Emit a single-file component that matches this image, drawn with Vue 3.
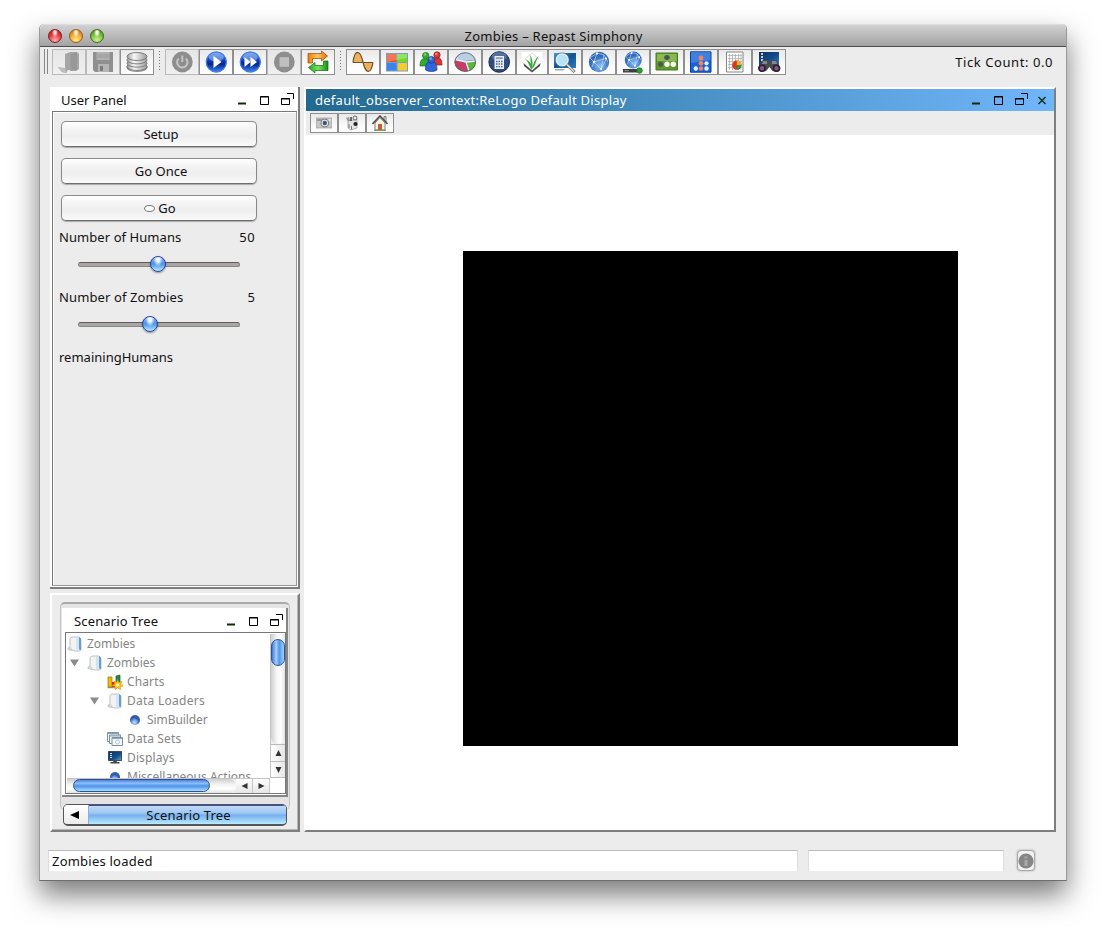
<script setup>
const disc = (fill, glyph, rim) =>
  `<circle cx="12.3" cy="12" r="10.4" fill="${fill}"/>${rim || ''}${glyph}`

const blueGlow = '<ellipse cx="12.3" cy="7" rx="7.6" ry="4.6" fill="#9dc2fa" opacity=".55"/><circle cx="12.3" cy="12" r="10" fill="none" stroke="#4a7fe0" stroke-width="1.2"/>'

const globe = `<circle cx="12" cy="12" r="10.2" fill="url(#globe)"/>
  <path d="M3 8L10 3L17 5L21 12M10 3L7 12L14 19M3 8L7 12L20 8M7 12L5 17M14 19L20 8M14 19L17 5" stroke="#d9ebff" stroke-width=".8" fill="none" opacity=".75"/>
  <g fill="#fff"><circle cx="10" cy="3.6" r="1.1"/><circle cx="7" cy="12" r="1.2"/><circle cx="14" cy="19" r="1.1"/><circle cx="19" cy="8.5" r="1.1"/></g>`

const fileIcons = [
  { name: 'open', off: true, art: '<path d="M1 17L8 19V4L13 2H20L22 4V19L19 21L11 20L9 23L5 22Z" fill="#a6a6a6"/><path d="M13.5 4L20 2V20L13.5 21Z" fill="#989898"/><path d="M1 17L8 18L10 23L5 22Z" fill="#bdbdbd"/>' },
  { name: 'save', off: true, art: '<path d="M2 2H22V22H4L2 20Z" fill="#8f8f8f"/><path d="M5.5 2H18.5V10H5.5Z" fill="#b2b2b2"/><path d="M6 5H18M6 7H18" stroke="#9a9a9a"/><path d="M7 14H18V22H7Z" fill="#b5b5b5"/><path d="M9 16H12V21H9Z" fill="#7c7c7c"/>' },
  { name: 'data', art: '<g stroke="#777" stroke-width=".9" fill="url(#metal)"><path d="M2 16V18C3 22.5 21 22.5 22 18V16Z"/><ellipse cx="12" cy="16.5" rx="10" ry="4"/><ellipse cx="12" cy="13.2" rx="10" ry="4"/><ellipse cx="12" cy="9.9" rx="10" ry="4"/><ellipse cx="12" cy="6.5" rx="10" ry="4"/></g>' },
]

const runIcons = [
  { name: 'power', off: true, art: disc('#8e8e8e', '<path d="M8.8 8.4A5.2 5.2 0 1 0 15.8 8.4M12.3 5.5V12" stroke="#c6c6c6" stroke-width="2" fill="none"/>') },
  { name: 'play', art: disc('url(#blue)', '<path d="M9.5 6V18L17.5 12Z" fill="#fff"/>', blueGlow) },
  { name: 'step', art: disc('url(#blue)', '<path d="M6.5 7V17L12.5 12ZM12.5 7V17L19 12Z" fill="#fff"/>', blueGlow) },
  { name: 'stop', off: true, art: disc('#8e8e8e', '<path d="M7.5 7.2H17V16.8H7.5Z" fill="#c0c0c0"/>') },
  { name: 'reset', art: '<path d="M2 13V3.500H15.500V1L21.500 6L15.500 11V8.500H6.500V13Z" fill="url(#orange)" stroke="#8c4a00" stroke-width=".7"/><path d="M22 11V20.500H9V23L2.500 17.500L9 12.500V15.500H17.500V11Z" fill="url(#green)" stroke="#176b0b" stroke-width=".7"/>' },
]

const viewIcons = [
  { name: 'wave', art: '<path d="M2 12C3.5 -1 9 -1 11.5 12ZM11.5 12C14 25.5 20 24 22 12Z" fill="#eeb05b"/><path d="M2 12.5C3.5 -1 9 -1 12 12C15 25 20 24 22 12.5M2 12.5H22" fill="none" stroke="#6e5130" stroke-width="1.2"/>' },
  { name: 'grid', art: '<path d="M1 3H23V21.5H1Z" fill="#7d9bc4"/><path d="M2 4H11.5V12H2Z" fill="#f04a1a"/><path d="M12.5 4H22V12H12.5Z" fill="#6ddc26"/><path d="M2 13H11.5V20.5H2Z" fill="#3c83ec"/><path d="M12.5 13H22V20.5H12.5Z" fill="#f6cb2c"/><path d="M2 4H22V8L2 12Z" fill="#fff" opacity=".25"/>' },
  { name: 'people', art: '<g stroke-width=".6"><g fill="#30ad2b" stroke="#126613"><path d="M1 16C1 9 4 8 6.500 9C10 8 11 11 11 16Z"/><circle cx="6.700" cy="5.600" r="3.200"/></g><g fill="#d73636" stroke="#831111"><path d="M13 15C13 8 16 7 18 8C22 7 23 11 23 15Z"/><circle cx="18" cy="5" r="3.200"/></g><g fill="#3164d6" stroke="#123184"><path d="M6.500 20C6.500 12 9 11 12.300 13C16 11 18 13 18 20C15 22 10 22 6.500 20Z"/><circle cx="12.300" cy="9.800" r="3.400"/></g></g><g fill="#fff" opacity=".4"><circle cx="6" cy="4.500" r="1.300"/><circle cx="17.300" cy="4" r="1.300"/><circle cx="11.600" cy="8.600" r="1.300"/></g>' },
  { name: 'pie', art: '<ellipse cx="12.2" cy="12.5" rx="10.5" ry="9.3" fill="#53606a"/><path d="M12 11L1.8 11C4 1 20 0 22.4 10Z" fill="#b9cfe3"/><path d="M12.500 12L2 9C0 17 8 22.500 15.500 21Z" fill="#c43f65"/><path d="M13 12L22.500 11.500C23 16 20 20 16.500 21Z" fill="#5bb63c"/><path d="M2 9.500L13 12L16 21M13 12L22.500 11" stroke="#f2f7f8" stroke-width="1.3" fill="none"/><ellipse cx="12.2" cy="12" rx="10.3" ry="9.300" fill="none" stroke="#57636e" stroke-width=".9"/>' },
  { name: 'calculator', art: '<circle cx="12.2" cy="12" r="10.3" fill="#304b7c" stroke="#182d58"/><ellipse cx="12.2" cy="6.5" rx="7.5" ry="4.5" fill="#7891b8" opacity=".55"/><path d="M7.5 6H17V19H7.5Z" fill="#edf1f4"/><path d="M8.7 7.200H15.8V9.200H8.7Z" fill="#8f9db3"/><path d="M9 11.5H16M9 14H16M9 16.7H16" stroke="#506487" stroke-width="1.3" stroke-dasharray="1.6 .9"/>' },
  { name: 'plant', narrow: true, art: '<path d="M1.5 2H22.5V23H1.5Z" fill="#fff"/><path d="M3.5 13L12 20.5L20.5 13L20 16L12 22.5L4 16Z" fill="#4b4b4b"/><path d="M5 9L12 3L19 9" stroke="#d5ddd0" fill="none"/><path d="M12 19C10 15 11 9 10 5C13 9 13 15 12 19ZM12 20C9 17 9 12 5 9C11 11 12 16 12 20ZM12 19C13 14 15 9 18.500 6C15.500 12 15 17 12 19Z" fill="#3da642"/>' },
  { name: 'search', art: '<path d="M1 3H23V18H1Z" fill="url(#screen)"/><path d="M2 19H12L10 20.500H2Z" fill="#9aa9b9"/><circle cx="9.2" cy="9.8" r="6.1" fill="#b8e3f7" stroke="#e4eef3" stroke-width="1.5"/><circle cx="9.2" cy="9.8" r="7" fill="none" stroke="#406987" stroke-width=".6"/><path d="M14 14.500L21.500 22" stroke="#666" stroke-width="3"/><path d="M14 14.500L21 21.500" stroke="#e8e8e8" stroke-width="1.5"/>' },
  { name: 'network', art: globe },
  { name: 'network-edit', art: `<g transform="translate(2.3 0) scale(.83)">${globe}</g><path d="M2 19H16V22.500H2Z" fill="#3b3f41"/><path d="M3.5 20.7H8" stroke="#8d9495"/><circle cx="18.5" cy="20.5" r="2.8" fill="#27a32c" stroke="#15681b" stroke-width=".7"/>` },
  { name: 'agents', art: '<path d="M1 3H22.5V20H1Z" fill="#5e9b2b" stroke="#49792a"/><path d="M2 4H21.5V11H2Z" fill="#a2cb62" opacity=".65"/><ellipse cx="12" cy="7.500" rx="2.800" ry="2.500" fill="#4d5552"/><circle cx="5.6" cy="14.3" r="2.5" fill="#4d5552"/><circle cx="12" cy="14.3" r="2.7" fill="#f9fdf3"/><circle cx="18.3" cy="14.3" r="2.7" fill="#f9fdf3"/>' },
  { name: 'hierarchy', art: '<path d="M1.5 1.8H22V22.2H1.5Z" fill="#1b63d1" stroke="#0a3da0"/><path d="M2 2H21.5V10L2 13Z" fill="#75adf5" opacity=".4"/><g fill="#f1825c"><circle cx="12" cy="8" r="2.4"/><circle cx="12" cy="13.3" r="2.4"/><circle cx="12" cy="18.5" r="2.2"/></g><g fill="#e2effe"><circle cx="6.8" cy="18.5" r="2.2"/><circle cx="17.5" cy="18.5" r="2.2"/><circle cx="17.5" cy="13.3" r="2.1"/></g>' },
  { name: 'report', art: '<path d="M3.5 2H20V22H3.5Z" fill="#fff" stroke="#858585"/><path d="M6.5 4V20M9.5 4V20M12.5 4V20M15.5 4V20M18 4V20M5 5.5H19M5 8.5H19M5 11.5H19M5 14.5H19M5 17.5H19" stroke="#b0b0b0" stroke-width=".8"/><circle cx="13.8" cy="15.2" r="4.6" fill="#dc3423"/><path d="M13.8 15.2V10.6A4.6 4.6 0 0 1 18.4 15Z" fill="#f2af20"/><path d="M13.8 15.2L18.4 15A4.6 4.6 0 0 1 14 19.800Z" fill="#269842"/>' },
  { name: 'binoculars', art: '<path d="M2 2H22V16H2Z" fill="url(#night)"/><path d="M4 4H6M4 7H6M4 10H6" stroke="#fff" stroke-width="1.7"/><path d="M1 18L5.500 10.500H10.500L12.5 12L14.500 10.500H19L23.5 18L21 22L15.5 21L12.5 17L9 21L4 22Z" fill="#4a4a4e"/><path d="M6 11H10V14H5ZM15 11H19L20 14H15Z" fill="#85868a"/><g fill="#8f4f9a" stroke="#252126" stroke-width="1.6"><circle cx="5" cy="18.3" r="3"/><circle cx="19.5" cy="18.3" r="3"/></g>' },
]

const displayIcons = [
  { name: 'camera', art: '<path d="M0 3H16V13H0Z" fill="#c7c7c7" stroke="#999" stroke-width=".7"/><path d="M1 4H6V6H1Z" fill="#999"/><circle cx="8.8" cy="8" r="4" fill="#e6e9eb" stroke="#787878"/><circle cx="8.8" cy="8" r="2.2" fill="#3c5777"/><path d="M12.5 5H15" stroke="#f7f7f7"/>' },
  { name: 'movie', art: '<path d="M2 3L5 2L6 6L4 7Z" fill="#999"/><path d="M4 6L13 4.500V13L7 15L4 13Z" fill="#e4e4e4" stroke="#888" stroke-width=".6"/><circle cx="11.5" cy="9" r="2.1" fill="#222"/><path d="M5 9V13M7.500 11V14.500" stroke="#777"/><circle cx="11" cy="3" r="2" fill="#eee" stroke="#444" stroke-width=".8"/><path d="M7 2V6" stroke="#333" stroke-width="1.400"/>' },
  { name: 'home', art: '<path d="M12 1.5H14V7L12 5Z" fill="#ddd" stroke="#555" stroke-width=".7"/><path d="M3 8L8 2.5L13 8V15H3Z" fill="#f8f4e5" stroke="#666" stroke-width=".8"/><path d="M.5 9L8 1L15.5 9" fill="none" stroke="#4e5047" stroke-width="1.6"/><path d="M6 9H10V15H6Z" fill="#c7602c"/><path d="M2 15.3H14" stroke="#659342"/>' },
]

const folder = '<path d="M3 2.500L5 1H12L14 3V14L12 15H7L6 14L5 14.500L1 13.500V12L3 11Z" fill="#f1f3f5" stroke="#a7adb3" stroke-width=".7"/><path d="M12 1L14 2.500V14L12 13.500Z" fill="#669ed3"/><path d="M9 2H12V13.500L9 14Z" fill="#d3e4f3"/><path d="M1 12L4 11L6 14.500L3 14.500Z" fill="#d2d4d5"/>'
const ball = '<circle cx="8" cy="8" r="5" fill="url(#ball)"/>'

const tree = [
  { label: 'Zombies', depth: 0, icon: folder },
  { label: 'Zombies', depth: 1, icon: folder, open: true },
  { label: 'Charts', depth: 2, icon: '<path d="M.5 13.5H12" stroke="#999" stroke-width="1.5"/><path d="M1 3H5V13H1Z" fill="#f2b707" stroke="#9a7300" stroke-width=".7"/><path d="M5 8H8V13H5Z" fill="#d42b17"/><path d="M9 2L13 1V10H9Z" fill="#25894c" stroke="#185b31" stroke-width=".7"/><path d="M10.5 5.5L11.7 8.5L15 7.5L13.5 10.3L16 12L13 12.5L13.5 15.5L10.7 13.7L8 15.5L8.2 12.3L5 11.5L8 10L7 7.3L9.8 8.3Z" fill="#ffcc18" stroke="#e98c0b" stroke-width=".7"/><circle cx="10.6" cy="11" r="1.4" fill="#fffbd0"/>' },
  { label: 'Data Loaders', depth: 2, icon: folder, open: true },
  { label: 'SimBuilder', depth: 3, icon: ball },
  { label: 'Data Sets', depth: 2, icon: '<g fill="#f4f8fa" stroke="#7892a6"><path d="M.5 1.5H11.5V10.5H.5Z"/><path d="M2.5 4H13.5V12.5H2.5Z"/><path d="M5 6.5H15.5V14.5H5Z"/></g><path d="M.5 2.5H11.5M3 5H13M5 7.5H15" stroke="#8ca6b6" stroke-width="1.2"/><circle cx="10.5" cy="11" r="2" fill="none" stroke="#bcc7ce"/>' },
  { label: 'Displays', depth: 2, icon: '<path d="M1.500 1.5H14.500V10.500H1.500Z" fill="url(#monitor)" stroke="#193451" stroke-width=".8"/><path d="M3 3.500H5M3 5.500H5M3 7.500H5" stroke="#bfe3ff"/><path d="M6.500 11H9.500L10 12H12.500V13.500H3.500V12H6Z" fill="#444"/>' },
  { label: 'Miscellaneous Actions', depth: 2, icon: ball },
]
</script>

<template>
  <div class="desk">
    <svg class="defs" width="0" height="0" aria-hidden="true">
      <defs>
        <linearGradient id="blue" x2="0" y2="1"><stop stop-color="#5b8fe8" /><stop offset=".45" stop-color="#0d3ab6" /><stop offset=".6" stop-color="#05268d" /><stop offset="1" stop-color="#3f8bfa" /></linearGradient>
        <linearGradient id="metal"><stop stop-color="#999" /><stop offset=".35" stop-color="#f8f8f8" /><stop offset="1" stop-color="#9b9b9b" /></linearGradient>
        <linearGradient id="orange"><stop stop-color="#ed7d0c" /><stop offset=".5" stop-color="#ffc35d" /><stop offset="1" stop-color="#e46b00" /></linearGradient>
        <linearGradient id="green"><stop stop-color="#23a620" /><stop offset=".5" stop-color="#73e35d" /><stop offset="1" stop-color="#178f17" /></linearGradient>
        <linearGradient id="screen" x2="1" y2="1"><stop stop-color="#3f9dda" /><stop offset=".5" stop-color="#13528f" /><stop offset="1" stop-color="#2d7fc1" /></linearGradient>
        <linearGradient id="night" x2="1" y2="1"><stop stop-color="#0c315a" /><stop offset=".5" stop-color="#134a85" /><stop offset="1" stop-color="#2d7fc1" /></linearGradient>
        <linearGradient id="monitor" x2="1" y2="1"><stop stop-color="#0c315a" /><stop offset=".6" stop-color="#164f8a" /><stop offset="1" stop-color="#54acdf" /></linearGradient>
        <radialGradient id="globe" cx=".55" cy=".7"><stop stop-color="#8bc2f8" /><stop offset="1" stop-color="#2f69b8" /></radialGradient>
        <radialGradient id="ball" cx=".45" cy=".75" r=".7"><stop stop-color="#c4dcfb" /><stop offset=".35" stop-color="#7fa8e6" /><stop offset=".7" stop-color="#2e55a8" /><stop offset="1" stop-color="#3a62b4" /></radialGradient>
      </defs>
    </svg>

    <div class="window">
      <header class="titlebar">
        <i class="light red"></i><i class="light amber"></i><i class="light lime"></i>
        <span class="caption"><span class="t-title">Zombies – Repast Simphony</span></span>
      </header>

      <div class="toolbar">
        <i class="grip"></i>
        <div class="tools">
          <button v-for="b in fileIcons" :key="b.name" :class="{ off: b.off }"><svg viewBox="0 0 24 24" v-html="b.art"></svg></button>
        </div>
        <i class="dots"></i>
        <div class="tools">
          <button v-for="b in runIcons" :key="b.name" :class="{ off: b.off }"><svg viewBox="0 0 24 24" v-html="b.art"></svg></button>
        </div>
        <i class="dots"></i>
        <div class="tools">
          <button v-for="b in viewIcons" :key="b.name" :class="{ narrow: b.narrow }"><svg viewBox="0 0 24 24" v-html="b.art"></svg></button>
        </div>
        <span class="ticks"><span class="t-tick">Tick Count: 0.0</span></span>
      </div>

      <div class="body">
        <div class="side">
          <section class="bevel user">
            <div class="head">
              <span class="t-user">User Panel</span>
              <svg class="ctl" width="58" height="14" viewBox="0 0 58 14"><path d="M1 10.5H9" stroke="#132b08" stroke-width="2" /><path d="M23.5 3.5H31.5V11.5H23.5ZM23 4H32" class="k" /><path d="M44.5 5.5H52.5V11.5H44.5ZM44 6H53M50 .5H56.5V6" class="k" /></svg>
            </div>
            <div class="well">
              <button class="aqua"><span class="t-setup">Setup</span></button>
              <button class="aqua"><span class="t-once">Go Once</span></button>
              <button class="aqua"><i class="oval"></i><span class="t-go">Go</span></button>
              <div class="line"><span class="t-hum">Number of Humans</span><span class="t-fifty">50</span></div>
              <div class="slider"><i class="knob mid"></i></div>
              <div class="line"><span class="t-zom">Number of Zombies</span><span>5</span></div>
              <div class="slider"><i class="knob low"></i></div>
              <div class="line"><span class="t-rem">remainingHumans</span></div>
            </div>
          </section>

          <section class="bevel scenario">
            <div class="pane">
              <div class="frame">
                <div class="head small">
                  <span class="t-scen">Scenario Tree</span>
                  <svg class="ctl" width="58" height="14" viewBox="0 0 58 14"><path d="M1 10.5H9" stroke="#132b08" stroke-width="2" /><path d="M23.5 3.5H31.5V11.5H23.5ZM23 4H32" class="k" /><path d="M44.5 5.5H52.5V11.5H44.5ZM44 6H53M50 .5H56.5V6" class="k" /></svg>
                </div>
                <div class="treebox">
                  <div class="list">
                    <div v-for="(n, i) in tree" :key="i" class="row" :class="'d' + n.depth">
                      <svg v-if="n.open" class="twist" viewBox="0 0 10 8"><path d="M0 0H10L5 8Z" fill="#8b8b8b" /></svg>
                      <svg class="ico" viewBox="0 0 16 16" v-html="n.icon"></svg>
                      <span :class="'n' + i">{{ n.label }}</span>
                    </div>
                  </div>
                  <div class="vbar">
                    <div class="vtrack"><i class="vthumb"></i></div>
                    <div class="arrow"><svg viewBox="0 0 6 6"><path d="M3 0L6 6H0Z" /></svg></div>
                    <div class="arrow last"><svg viewBox="0 0 6 6"><path d="M3 6L6 0H0Z" /></svg></div>
                  </div>
                  <div class="hbar">
                    <div class="htrack"><i class="hthumb"></i></div>
                    <div class="arrow"><svg viewBox="0 0 6 6"><path d="M0 3L6 0V6Z" /></svg></div>
                    <div class="arrow"><svg viewBox="0 0 6 6"><path d="M6 3L0 0V6Z" /></svg></div>
                  </div>
                </div>
              </div>
            </div>
            <div class="tab">
              <span class="back"><svg width="9" height="8" viewBox="0 0 9 8"><path d="M9 0V8L0 4Z" /></svg></span>
              <span class="tabname"><span class="t-scen">Scenario Tree</span></span>
            </div>
          </section>
        </div>

        <section class="bevel display">
          <div class="bluehead">
            <span class="t-ctx">default_observer_context:ReLogo Default Display</span>
            <svg width="78" height="14" viewBox="0 0 78 14"><path d="M1 10.5H9" stroke="#132b08" stroke-width="2" /><path d="M23.5 3.5H31.5V11.5H23.5ZM23 4H32" class="k" /><path d="M44.5 5.5H52.5V11.5H44.5ZM44 6H53M50 .5H56.5V6" class="k" /><path d="M67.5 4L74.5 11M74.5 4L67.5 11" stroke="#132b08" stroke-width="1.3" /></svg>
          </div>
          <div class="dtools">
            <button v-for="b in displayIcons" :key="b.name"><svg viewBox="0 0 16 16" v-html="b.art"></svg></button>
          </div>
          <div class="stage"><div class="world"></div></div>
        </section>
      </div>

      <footer class="status">
        <div class="field msg"><span class="t-load">Zombies loaded</span></div>
        <div class="field prog"></div>
        <button class="info"><svg width="18" height="20" viewBox="0 0 18 20"><circle cx="9" cy="10" r="7.6" fill="#868686" /><path d="M7.5 5.5H10.5V7.5H7.5ZM7.5 9H10.5V15H7.5Z" fill="#aaa" /></svg></button>
      </footer>
    </div>
  </div>
</template>

<style>
body { background: #fff; overflow: hidden; }
</style>

<style scoped>
.desk { width: 1106px; height: 935px; padding: 24px 0 0 39px; box-sizing: border-box; font: 13px/16px "Noto Sans", "Open Sans", sans-serif; color: #111; }
.desk * { box-sizing: border-box; }
.defs { position: absolute; }
button { padding: 0; margin: 0; font: inherit; color: inherit; }
.window { width: 1028px; height: 857px; background: #ececec; border: 1px solid #999; border-top: 0; border-bottom-color: #6e6e6e; border-radius: 5px 5px 0 0; box-shadow: 0 14px 28px rgba(0, 0, 0, .52); display: flex; flex-direction: column; }
.titlebar { height: 23px; flex: none; border-radius: 5px 5px 0 0; background: linear-gradient(#d3d3d3, #a3a3a3); border-bottom: 1px solid #4b4b4b; box-shadow: inset 0 1px #dedede; display: flex; align-items: center; padding: 2px 0 0 8px; }
.light { width: 14px; height: 14px; border-radius: 50%; margin-right: 7px; border: 1px solid #7b2222; }
.red { background: radial-gradient(ellipse at 50% 20%, #ffd9d9 0 12%, transparent 35%), radial-gradient(circle at 50% 85%, #ffaeb0, #e8343c 55%, #a5141a); }
.amber { border-color: #9a5a15; background: radial-gradient(ellipse at 50% 20%, #fff2cf 0 12%, transparent 35%), radial-gradient(circle at 50% 85%, #ffee8a, #f1a434 55%, #b5651a); }
.lime { border-color: #3f6c1c; background: radial-gradient(ellipse at 50% 20%, #edffd9 0 12%, transparent 35%), radial-gradient(circle at 50% 85%, #d0f690, #79b93f 55%, #47791f); }
.caption { flex: 1; display: flex; justify-content: center; padding-right: 70px; white-space: nowrap; }
.t-title { letter-spacing: .25px; }
.t-tick { letter-spacing: .57px; margin-right: -1px; }
.t-hum { letter-spacing: .07px; }
.t-zom { letter-spacing: .12px; }
.t-fifty { letter-spacing: .4px; }
.t-scen { letter-spacing: .15px; }
.t-ctx { letter-spacing: .26px; }
.t-load { letter-spacing: .22px; }
.n2, .n5, .n6 { letter-spacing: .13px; }
.n3 { letter-spacing: .26px; }
.n4 { letter-spacing: -.08px; }
.toolbar { height: 40px; flex: none; display: flex; align-items: flex-start; padding: 2px 14px 0 4px; }
.grip { width: 4px; height: 25px; border-left: 1px solid #888; border-right: 1px solid #888; margin-right: 4px; }
.tools { display: flex; }
.tools button { width: 34px; height: 26px; border: 1px solid #8f8f8f; background: linear-gradient(#e9e9e9, #fcfcfc 70%); display: flex; align-items: center; justify-content: center; }
.tools button.off { border-color: #bababa; background: linear-gradient(#e6e6e6, #f0f0f0); }
.tools button.narrow { width: 32px; }
.tools svg { width: 24px; height: 24px; flex: none; }
.dots { width: 1px; height: 20px; margin: 2px 5px; background: repeating-linear-gradient(#777 0 1px, transparent 1px 3px); }
.ticks { margin-left: auto; padding-top: 5px; white-space: nowrap; }
.body { height: 745px; flex: none; display: flex; gap: 4px; padding-left: 10px; }
.side { width: 250px; display: flex; flex-direction: column; gap: 4px; }
.bevel { border: 2px solid #fff; border-right-color: #7e7e7e; border-bottom-color: #7e7e7e; box-shadow: inset -1px -1px #b5b5b5; }
.user { height: 502px; border-width: 0 2px 2px 0; background: #fff; padding: 0 1px 1px 2px; box-shadow: none; }
.head { height: 24px; display: flex; align-items: center; justify-content: space-between; padding: 2px 1px 0 9px; white-space: nowrap; }
.ctl { margin-right: 1px; }
.k { fill: none; stroke: #000; stroke-width: 1; }
.well { height: 475px; background: #ececec; border: 1px solid #777; border-right-color: #999; border-bottom-color: #999; box-shadow: inset 1px 1px #fff; padding: 9px 0 0 8px; }
.aqua { width: 196px; height: 26px; margin-bottom: 11px; border: 1px solid #8b8b8b; border-bottom-color: #6d6d6d; border-radius: 5px; background: linear-gradient(#fff, #f4f4f4 30%, #eee 60%, #fafafa); box-shadow: 0 1px 1px #aaa; display: flex; align-items: center; justify-content: center; padding-left: 4px; }
.oval { width: 11px; height: 7px; border: 1px solid #777; border-radius: 50%; background: #fff; margin-right: 3px; margin-left: -2px; }
.line { width: 196px; height: 16px; margin-left: -2px; display: flex; justify-content: space-between; white-space: nowrap; }
.aqua + .line { margin-top: -3px; }
.slider { width: 162px; height: 5px; margin: 17px 0 22px 17px; border-radius: 3px; background: #aaa6a6; border: 1px solid #8c8787; border-top-color: #625b5b; position: relative; }
.knob { position: absolute; top: -7px; width: 16px; height: 16px; border-radius: 50%; border: 1px solid #2a3d9e; background: radial-gradient(ellipse at 50% 15%, #f2faff 0 15%, transparent 45%), linear-gradient(#8ab8f0, #4b94ea 50%, #b9ecff); box-shadow: 0 1px 2px rgba(0, 0, 0, .4); }
.mid { left: 71px; }
.low { left: 63px; }
.scenario { flex: 1; padding: 7px 9px 4px 8px; display: flex; flex-direction: column; }
.pane { width: 230px; height: 208px; border: 1px solid #c4c4c4; border-top: 2px solid #aaa; border-bottom: 0; border-radius: 5px; background: #e4e4e4; padding: 4px 1px 0 1px; }
.frame { height: 189px; width: 226px; background: #fff; border-right: 2px solid #858585; border-bottom: 2px solid #858585; padding: 0 0 1px 3px; }
.head.small { padding: 2px 1px 0 9px; }
.treebox { height: 162px; border: 1px solid #777; background: #fff; display: grid; grid-template: 144px 15px / 203px 15px; padding: 1px 0 0 1px; }
.list { overflow: hidden; color: #858585; font-size: 12px; }
.row { height: 19px; display: flex; align-items: center; white-space: nowrap; }
.ico { width: 16px; height: 16px; flex: none; margin-right: 4px; }
.twist { width: 9px; height: 8px; margin-right: 8px; flex: none; }
.d1 { padding-left: 3px; }
.d2 { padding-left: 40px; }
.d2:has(.twist) { padding-left: 23px; }
.d3 { padding-left: 60px; }
.vbar { display: flex; flex-direction: column; background: #eee; border-left: 1px solid #c4c4c4; }
.vtrack { flex: 1; padding: 5px 0 0; background: linear-gradient(90deg, #cfcfcf, #f4f4f4 40%, #fff 70%, #e3e3e3); border-radius: 0 0 7px 7px; }
.vthumb { display: block; width: 14px; height: 27px; border-radius: 7px; border: 1px solid #2f4f9f; background: linear-gradient(90deg, #3c78d8, #a6d0ff 35%, #4f95ea 60%, #9fd4fd); }
.arrow { height: 17px; border-top: 1px solid #bbb; background: linear-gradient(90deg, #fff, #e6e6e6); display: flex; align-items: center; justify-content: center; }
.arrow svg { width: 7px; height: 6px; fill: #333; }
.last { border-bottom: 1px solid #bbb; }
.hbar { display: flex; border-top: 1px solid #c4c4c4; background: #eee; }
.htrack { flex: 1; padding: 0 0 0 6px; background: linear-gradient(#cfcfcf, #f4f4f4 40%, #fff 70%, #e3e3e3); border-radius: 0 7px 7px 0; }
.hthumb { display: block; width: 137px; height: 13px; border-radius: 7px; border: 1px solid #2f4f9f; background: linear-gradient(#4a82dc, #8fc0f8 30%, #4c92ea 55%, #a8e0ff); }
.hbar .arrow { width: 17px; height: 14px; border-top: 0; border-right: 1px solid #c8c8c8; background: linear-gradient(#fff, #e6e6e6); }
.tab { height: 22px; width: 224px; margin: -6px 0 0 3px; border: 1px solid #555; border-radius: 5px; display: flex; overflow: hidden; background: #f3f3f3; border-bottom-width: 2px; z-index: 1; }
.back { width: 24px; padding-right: 3px; display: flex; align-items: center; justify-content: center; background: linear-gradient(#fff, #ececec); }
.tabname { flex: 1; display: flex; align-items: center; justify-content: center; padding-left: 2px; box-shadow: inset 0 1px #3d50a0; background: linear-gradient(#c5dcf7, #a1c8f4 40%, #78b1ef 55%, #b9ebff); border-left: 1px solid #8faed3; white-space: nowrap; }
.display { width: 752px; background: #fff; display: flex; flex-direction: column; box-shadow: none; }
.bluehead { height: 22px; flex: none; background: linear-gradient(90deg, #21698f, #70b6fa); color: #fff; display: flex; align-items: center; justify-content: space-between; padding: 0 5px 0 9px; white-space: nowrap; }
.dtools { height: 24px; flex: none; background: #ececec; padding: 2px 0 0 4px; display: flex; }
.dtools button { width: 28px; height: 20px; border: 1px solid #8f8f8f; background: linear-gradient(#e9e9e9, #fcfcfc 70%); display: flex; align-items: center; justify-content: center; }
.dtools svg { width: 16px; height: 16px; }
.stage { flex: 1; padding: 116px 0 0 157px; }
.world { width: 495px; height: 495px; background: #000; }
.status { display: flex; padding: 18px 0 0 8px; }
.field { height: 22px; background: #fff; border: 1px solid #dedede; border-top: 1px solid #bcbcbc; border-bottom-color: #eee; white-space: nowrap; }
.msg { width: 750px; padding: 2px 0 0 3px; }
.prog { width: 196px; margin-left: 10px; }
.info { width: 18px; height: 21px; margin-left: 13px; border: 1px solid #a8a8a8; border-radius: 4px; background: #f2f2f2; box-shadow: 0 0 2px #999; display: flex; align-items: center; justify-content: center; }
.info svg { flex: none; }
</style>
